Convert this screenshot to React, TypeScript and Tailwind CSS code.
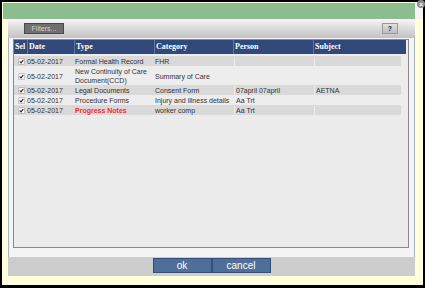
import React from "react";

interface DocRow {
  id: number;
  date: string;
  type: React.ReactNode;
  category: string;
  person: string;
  subject: string;
  red?: boolean;
}

const rows: DocRow[] = [
  { id: 1, date: "05-02-2017", type: "Formal Health Record", category: "FHR", person: "", subject: "" },
  {
    id: 2,
    date: "05-02-2017",
    type: (
      <>
        New Continuity of Care
        <br />
        Document(CCD)
      </>
    ),
    category: "Summary of Care",
    person: "",
    subject: "",
  },
  { id: 3, date: "05-02-2017", type: "Legal Documents", category: "Consent Form", person: "07april 07april", subject: "AETNA" },
  { id: 4, date: "05-02-2017", type: "Procedure Forms", category: "Injury and illness details", person: "Aa Trt", subject: "" },
  { id: 5, date: "05-02-2017", type: "Progress Notes", category: "worker comp", person: "Aa Trt", subject: "", red: true },
];

const CheckBox = () => (
  <span className="flex h-[5px] w-[5px] items-center justify-center bg-[#f4f4f4] shadow-[0_0_0_0.5px_#a0a0a0]">
    <svg width="5" height="5" viewBox="0 0 5 5">
      <path d="M0.8 2.5 L2 3.9 L4.3 1" stroke="#222" strokeWidth="1.1" fill="none" />
    </svg>
  </span>
);

// document picker dialog
export default function App() {
  return (
    <div className="h-[288px] w-[425px] bg-black pb-[3px] pl-[2px] pr-[2px] pt-[2px] font-['Liberation_Sans',Arial,sans-serif]">
      <div className="relative flex h-full flex-col bg-[#ffffdc]">
        {/* title strip */}
        <div className="flex h-[17px]">
          <div className="w-px" />
          <div className="mt-px h-[16px] w-[412px] bg-[#8cbd8e]" />
          <div className="flex-1 bg-[#f4f4f4]" />
        </div>
        <span className="absolute right-[-2px] top-[-2px] flex h-[8px] w-[8px] items-center justify-center rounded-full bg-[#8a8a8a] text-[7px] font-bold leading-none text-white">
          ×
        </span>

        <div className="ml-[6px] flex w-[407px] flex-col">
          {/* toolbar */}
          <div className="flex h-[19px] items-center justify-between bg-gradient-to-b from-[#f6f6f6] to-[#c2c2c2] pl-[16px] pr-[17px]">
            <button className="flex h-[11px] w-[40px] items-center justify-center border border-[#4a4a4a] bg-[#6f6f6f] text-[7px] leading-none text-[#d4d4d4]">
              Filters...
            </button>
            <button className="flex h-[11px] w-[16px] items-center justify-center border border-[#9a9a9a] bg-gradient-to-b from-[#e2e2e2] to-[#bdbdbd] text-[7px] font-bold leading-none text-[#222]">
              ?
            </button>
          </div>

          {/* list area */}
          <div className="border-x border-[#a8b2c2] bg-[#f4f4f4] pb-[9px] pl-[4px] pr-[5px] pt-px">
            <div className="h-[209px] border border-[#8a8a8a] bg-[#ececec]">
              <div className="flex h-[14px] w-[392px] items-center bg-[#30497a] font-['Liberation_Serif',serif] text-[8px] font-bold leading-none text-white">
                <div className="flex h-full w-[14px] items-center border-r border-[#5f77a3] pl-px">Sel</div>
                <div className="flex h-full w-[47px] items-center border-r border-[#5f77a3] pl-px">Date</div>
                <div className="flex h-full w-[80px] items-center border-r border-[#5f77a3] pl-px">Type</div>
                <div className="flex h-full w-[79px] items-center border-r border-[#5f77a3] pl-px">Category</div>
                <div className="flex h-full w-[80px] items-center border-r border-[#5f77a3] pl-px">Person</div>
                <div className="flex-1 pl-px">Subject</div>
              </div>
              <div className="mt-[2px] w-[387px] text-[7px] leading-[9px] text-[#333]">
                {rows.map((r, i) => (
                  <div
                    key={r.id}
                    className={
                      "flex items-center pt-px " + (i % 2 === 0 ? "bg-[#d9d9d9]" : "bg-[#ededed]")
                    }
                  >
                    <div className="flex w-[14px] justify-center">
                      <CheckBox />
                    </div>
                    <div className="-ml-px w-[48px]">{r.date}</div>
                    <div className={"w-[80px] " + (r.red ? "font-bold text-[#ff2a2a]" : "")}>{r.type}</div>
                    <div className="w-[79px]">{r.category}</div>
                    <div className="w-[80px] self-stretch border-l border-[#ececec] pl-px">{r.person}</div>
                    <div className="flex-1 self-stretch border-l border-[#ececec] pl-px">{r.subject}</div>
                  </div>
                ))}
              </div>
            </div>
          </div>

          {/* footer buttons */}
          <div className="flex h-[19px] justify-center bg-[#cdcdcd] pt-px">
            <button className="flex h-[15px] w-[59px] items-center justify-center border border-[#34507a] bg-[#4f6f9a] text-[10px] leading-none text-white">
              ok
            </button>
            <button className="flex h-[15px] w-[59px] items-center justify-center border border-[#34507a] bg-[#4f6f9a] text-[10px] leading-none text-white">
              cancel
            </button>
          </div>
        </div>
      </div>
    </div>
  );
}
